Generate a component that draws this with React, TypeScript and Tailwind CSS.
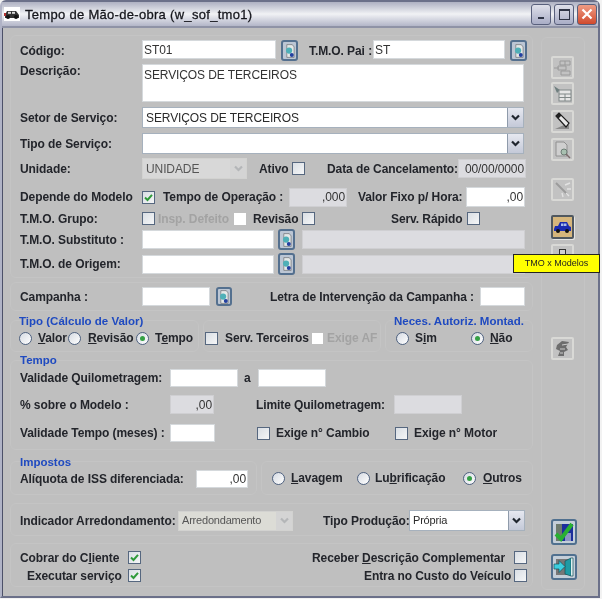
import type { ReactNode } from 'react';

const LABEL = 'whitespace-nowrap text-[12px] font-bold leading-none tracking-[-0.08px] text-[#23252b]';

function Label({ w, className = '', children }: { w?: string; className?: string; children: ReactNode }) {
    return <span className={`${LABEL} shrink-0 ${w ?? ''} ${className}`}>{children}</span>;
}

function Field({ className = '', right, gray, children }: { className?: string; right?: boolean; gray?: boolean; children?: ReactNode }) {
    return (
        <div
            className={`flex shrink-0 items-center border px-[1px] text-[12px] leading-none tracking-[-0.1px] text-[#333] ${right ? 'justify-end' : ''} ${
                gray ? 'border-[#cfcfd2] bg-[#dcdce0]' : 'border-[#d5d9dc] bg-white'
            } ${className}`}
        >
            {children}
        </div>
    );
}

function Check({ checked, className = '' }: { checked?: boolean; className?: string }) {
    return (
        <span className={`flex size-[13px] shrink-0 items-center justify-center border border-[#56677f] bg-gradient-to-br from-[#d9dee4] to-[#f5f6f7] ${className}`}>
            {checked && (
                <svg viewBox="0 0 11 11" className="size-[11px]">
                    <path d="M2 5.5 L4.5 8 L9 2.8" fill="none" stroke="#2f9a3a" strokeWidth="2" />
                </svg>
            )}
        </span>
    );
}

function Radio({ on }: { on?: boolean }) {
    return (
        <span className="flex size-[13px] shrink-0 items-center justify-center rounded-full border border-[#4f6280] bg-gradient-to-br from-[#d5dae2] to-white">
            {on && <span className="size-[5px] rounded-full bg-[#35a045]" />}
        </span>
    );
}

function Chevron({ light }: { light?: boolean }) {
    return (
        <svg viewBox="0 0 9 7" className="h-[7px] w-[9px]">
            <path d="M1 1.5 L4.5 5 L8 1.5" fill="none" stroke={light ? '#b4b6b8' : '#20262f'} strokeWidth="2.2" />
        </svg>
    );
}

function Select({ className = '', disabled, small, children }: { className?: string; disabled?: boolean; small?: boolean; children?: ReactNode }) {
    return (
        <div className={`flex shrink-0 border ${disabled ? 'border-[#d2d2d0] bg-[#d8d8d8]' : 'border-[#a6b1bd] bg-white'} ${className}`}>
            <div className={`flex flex-1 items-center overflow-hidden whitespace-nowrap pl-[3px] leading-none ${small ? 'text-[11px] tracking-[-0.2px]' : 'text-[12px] tracking-[-0.1px]'} ${disabled ? 'text-[#555]' : 'text-[#2a2a2a]'}`}>
                {children}
            </div>
            <div className={`flex w-[16px] items-center justify-center ${disabled ? 'bg-[#d4d4d4]' : 'bg-gradient-to-b from-[#e6e8f0] to-[#c4c9d8] border-l border-[#8f9bab]'}`}>
                <Chevron light={disabled} />
            </div>
        </div>
    );
}

function LookupButton({ className = '' }: { className?: string }) {
    return (
        <div className={`flex shrink-0 items-center justify-center rounded-[3px] border-2 border-[#54708f] bg-[#bcc6d4] ${className}`}>
            <svg viewBox="0 0 11 15" className="h-[14px] w-[10px]">
                <path d="M2 0.5 H8 L10 3 V14.5 H2 Z" fill="#e4e8e8" stroke="#555" strokeWidth="0.6" />
                <circle cx="4.5" cy="7" r="3.4" fill="#4fb0b8" />
                <circle cx="7.5" cy="12" r="2.2" fill="#2340a0" />
            </svg>
        </div>
    );
}

function ToolButton({ className = '', active, children }: { className?: string; active?: boolean; children: ReactNode }) {
    return (
        <div
            className={`flex w-[23px] items-center justify-center rounded-[2px] border-2 ${
                active ? 'border-[#50585f] bg-[#d6b67c] shadow-[1px_1px_0_#e4e4e4]' : 'border-[#d9d9d6] bg-[#c2c2c2]'
            } ${className}`}
        >
            {children}
        </div>
    );
}

function Panel({ className = '', children }: { className?: string; children?: ReactNode }) {
    return <div className={`shrink-0 rounded-[6px] border border-[#c4c4c4] bg-[#bfbfbf] ${className}`}>{children}</div>;
}

function Heading({ className = '', children }: { className?: string; children: ReactNode }) {
    return <div className={`h-[12px] whitespace-nowrap text-[11.5px] font-bold leading-[12px] text-[#1f4ac0] ${className}`}>{children}</div>;
}

function WinButton({ className = '', children }: { className?: string; children: ReactNode }) {
    return <div className={`flex h-[21px] w-[20px] items-center justify-center rounded-[3px] border border-[#59607c] ${className}`}>{children}</div>;
}

export default function App() {
    return (
        <div className="relative h-[599px] w-[602px] overflow-hidden bg-[#f2f2f2] [font-family:'Liberation_Sans',sans-serif] blur-[0.35px]">
            <div className="flex h-[598px] w-[600px] flex-col rounded-t-[6px] border-2 border-[#6b7089] border-l-[#b0b3c6] bg-[#bfbfbf] shadow-[inset_1px_0_0_#4c5068]">
                {/* barra de titulo */}
                <div className="flex h-[26px] shrink-0 items-center border-b-2 border-[#8f93a6] bg-gradient-to-b from-[#aeb1c2] via-[#f1f2f5] to-[#b3b6c8] pl-[2px] pr-[1px]">
                    <span className="flex h-[14px] w-[16px] shrink-0 items-center justify-center bg-white">
                        <svg viewBox="0 0 16 10" className="h-[10px] w-[16px]">
                            <path d="M1 6 L3 2 H12 L15 6 V9 H1 Z" fill="#333" />
                            <rect x="4" y="2.8" width="3" height="2" fill="#ddd" />
                            <rect x="8" y="2.8" width="3" height="2" fill="#ddd" />
                            <circle cx="4" cy="8" r="2" fill="#111" />
                            <circle cx="12" cy="8" r="2" fill="#111" />
                            <rect x="0" y="4" width="2" height="3" fill="#b03030" />
                        </svg>
                    </span>
                    <span className="ml-[5px] whitespace-nowrap text-[13px] leading-none tracking-[0.3px] text-[#15161c] [-webkit-text-stroke:0.3px_#15161c]">Tempo de Mão-de-obra (w_sof_tmo1)</span>
                    <div className="ml-auto flex gap-[3px]">
                        <WinButton className="bg-gradient-to-b from-[#dfe0ea] to-[#a9adc6]">
                            <span className="mt-[8px] h-[2px] w-[6px] bg-[#2f3446]" />
                        </WinButton>
                        <WinButton className="bg-gradient-to-b from-[#dfe0ea] to-[#a9adc6]">
                            <span className="size-[11px] border border-t-2 border-[#2f3446]" />
                        </WinButton>
                        <WinButton className="bg-gradient-to-b from-[#ee9b84] to-[#d0492c]">
                            <svg viewBox="0 0 12 12" className="size-[12px]">
                                <path d="M1.5 1.5 L10.5 10.5 M10.5 1.5 L1.5 10.5" stroke="#fff" strokeWidth="2.2" />
                            </svg>
                        </WinButton>
                    </div>
                </div>

                <div className="flex gap-[8px] pl-[8px] pt-[7px]">
                    {/* formulario */}
                    <div className="flex w-[523px] shrink-0 flex-col">
                        <Panel className="flex h-[243px] flex-col px-[9px] pt-[4px]">
                            <div className="flex h-[21px] items-start">
                                <Label w="w-[122px]" className="mt-[5px]">Código:</Label>
                                <Field className="h-[19px] w-[134px]">ST01</Field>
                                <LookupButton className="ml-[5px] h-[21px] w-[17px]" />
                                <Label w="w-[64px]" className="ml-[11px] mt-[5px]">T.M.O. Pai :</Label>
                                <Field className="h-[19px] w-[132px]">ST</Field>
                                <LookupButton className="ml-[5px] h-[21px] w-[17px]" />
                            </div>
                            <div className="mt-[3px] flex h-[38px] items-start">
                                <Label w="w-[122px]" className="mt-[1px]">Descrição:</Label>
                                <Field className="h-[38px] w-[382px] !items-start pt-[4px]">SERVIÇOS DE TERCEIROS</Field>
                            </div>
                            <div className="mt-[5px] flex h-[21px] items-center">
                                <Label w="w-[122px]">Setor de Serviço:</Label>
                                <Select className="h-[21px] w-[382px]">SERVIÇOS DE TERCEIROS</Select>
                            </div>
                            <div className="mt-[5px] flex h-[21px] items-center">
                                <Label w="w-[122px]">Tipo de Serviço:</Label>
                                <Select className="h-[21px] w-[382px]" />
                            </div>
                            <div className="mt-[4px] flex h-[21px] items-center">
                                <Label w="w-[122px]">Unidade:</Label>
                                <Select disabled className="h-[21px] w-[105px]">UNIDADE</Select>
                                <Label w="w-[33px]" className="ml-[12px]">Ativo</Label>
                                <Check />
                                <Label w="w-[131px]" className="ml-[22px]">Data de Cancelamento:</Label>
                                <Field gray right className="h-[19px] w-[68px]">00/00/0000</Field>
                            </div>
                            <div className="mt-[8px] flex h-[20px] items-center">
                                <Label w="w-[122px]">Depende do Modelo</Label>
                                <Check checked />
                                <Label w="w-[126px]" className="ml-[8px]">Tempo de Operação :</Label>
                                <Field gray right className="h-[19px] w-[58px]">,000</Field>
                                <Label w="w-[108px]" className="ml-[11px]">Valor Fixo p/ Hora:</Label>
                                <Field right className="h-[20px] w-[59px]">,00</Field>
                            </div>
                            <div className="mt-[5px] flex h-[13px] items-center">
                                <Label w="w-[122px]">T.M.O. Grupo:</Label>
                                <Check />
                                <Label w="w-[76px]" className="ml-[3px] !text-[#a3a3a3]">Insp. Defeito</Label>
                                <span className="h-[12px] w-[12px] shrink-0 bg-white" />
                                <Label w="w-[49px]" className="ml-[7px]">Revisão</Label>
                                <Check />
                                <Label w="w-[76px]" className="ml-[76px]">Serv. Rápido</Label>
                                <Check />
                            </div>
                            <div className="mt-[4px] flex h-[21px] items-center">
                                <Label w="w-[122px]">T.M.O. Substituto :</Label>
                                <Field className="h-[19px] w-[132px]" />
                                <LookupButton className="ml-[4px] h-[21px] w-[17px]" />
                                <Field gray className="ml-[7px] h-[19px] w-[223px]" />
                            </div>
                            <div className="mt-[3px] flex h-[22px] items-center">
                                <Label w="w-[122px]">T.M.O. de Origem:</Label>
                                <Field className="h-[19px] w-[132px]" />
                                <LookupButton className="ml-[4px] h-[22px] w-[17px]" />
                                <Field gray className="ml-[7px] h-[19px] w-[223px]" />
                            </div>
                        </Panel>

                        <Panel className="mt-[4px] flex h-[29px] items-center px-[9px]">
                            <Label w="w-[122px]">Campanha :</Label>
                            <Field className="h-[19px] w-[68px]" />
                            <LookupButton className="ml-[6px] h-[19px] w-[16px]" />
                            <Label w="w-[210px]" className="ml-[38px]">Letra de Intervenção da Campanha :</Label>
                            <Field className="h-[19px] w-[45px]" />
                        </Panel>

                        <div className="mt-[9px] flex gap-[4px]">
                            <Panel className="h-[32px] w-[189px] px-[8px]">
                                <Heading className="-mt-[6px]">Tipo (Cálculo de Valor)</Heading>
                                <div className="mt-[2px] flex h-[18px] items-center">
                                    <Radio />
                                    <Label w="w-[30px]" className="ml-[6px]"><u>V</u>alor</Label>
                                    <Radio />
                                    <Label w="w-[48px]" className="ml-[7px]"><u>R</u>evisão</Label>
                                    <Radio on />
                                    <Label className="ml-[6px]">T<u>e</u>mpo</Label>
                                </div>
                            </Panel>
                            <Panel className="flex h-[32px] w-[178px] items-start pl-[1px] pt-[8px]">
                                <div className="flex h-[18px] items-center">
                                    <Check />
                                    <Label w="w-[87px]" className="ml-[7px]">Serv. Terceiros</Label>
                                    <span className="size-[11px] shrink-0 bg-white" />
                                    <Label className="ml-[4px] !text-[#a3a3a3]">Exige AF</Label>
                                </div>
                            </Panel>
                            <Panel className="h-[32px] w-[148px] pl-[8px]">
                                <Heading className="-mt-[6px]">Neces. Autoriz. Montad.</Heading>
                                <div className="mt-[2px] flex h-[18px] items-center pl-[2px]">
                                    <Radio />
                                    <Label w="w-[56px]" className="ml-[6px]">S<u>i</u>m</Label>
                                    <Radio on />
                                    <Label className="ml-[6px]"><u>N</u>ão</Label>
                                </div>
                            </Panel>
                        </div>

                        <Panel className="mt-[8px] h-[90px] px-[9px]">
                            <Heading className="-mt-[7px]">Tempo</Heading>
                            <div className="mt-[3px] flex h-[18px] items-center">
                                <Label w="w-[150px]">Validade Quilometragem:</Label>
                                <Field className="h-[18px] w-[68px]" />
                                <Label w="w-[14px]" className="ml-[6px]">a</Label>
                                <Field className="h-[18px] w-[68px]" />
                            </div>
                            <div className="mt-[8px] flex h-[19px] items-center">
                                <Label w="w-[150px]">% sobre o Modelo :</Label>
                                <Field gray right className="h-[19px] w-[44px]">,00</Field>
                                <Label w="w-[138px]" className="ml-[42px]">Limite Quilometragem:</Label>
                                <Field gray className="h-[19px] w-[68px]" />
                            </div>
                            <div className="mt-[10px] flex h-[18px] items-center">
                                <Label w="w-[150px]">Validade Tempo (meses) :</Label>
                                <Field className="h-[18px] w-[45px]" />
                                <Check className="ml-[42px]" />
                                <Label w="w-[119px]" className="ml-[6px]">Exige n° Cambio</Label>
                                <Check />
                                <Label className="ml-[6px]">Exige n° Motor</Label>
                            </div>
                        </Panel>

                        <div className="mt-[11px] flex gap-[4px]">
                            <Panel className="h-[34px] w-[247px] px-[9px]">
                                <Heading className="-mt-[6px]">Impostos</Heading>
                                <div className="mt-[2px] flex h-[18px] items-center">
                                    <Label w="w-[176px]" className="tracking-[-0.2px]">Alíquota de ISS diferenciada:</Label>
                                    <Field right className="h-[18px] w-[52px]">,00</Field>
                                </div>
                            </Panel>
                            <Panel className="flex h-[34px] w-[272px] items-center pl-[10px]">
                                <Radio />
                                <Label w="w-[66px]" className="ml-[6px]"><u>L</u>avagem</Label>
                                <Radio />
                                <Label w="w-[88px]" className="ml-[5px]">Lu<u>b</u>rificação</Label>
                                <Radio on />
                                <Label className="ml-[7px]"><u>O</u>utros</Label>
                            </Panel>
                        </div>

                        <Panel className="mt-[8px] flex h-[33px] items-start px-[9px] pt-[6px]">
                            <div className="flex h-[21px] items-center">
                                <Label w="w-[158px]">Indicador Arredondamento:</Label>
                                <Select disabled small className="h-[20px] w-[115px] !bg-[#dcdcd6]">Arredondamento</Select>
                                <Label w="w-[86px]" className="ml-[30px]">Tipo Produção:</Label>
                                <Select small className="h-[21px] w-[116px]">Própria</Select>
                            </div>
                        </Panel>

                        <Panel className="mt-[7px] h-[44px] px-[9px] pt-[7px]">
                            <div className="flex h-[13px] items-center">
                                <Label w="w-[108px]">Cobrar do C<u>l</u>iente</Label>
                                <Check checked />
                                <Label w="w-[202px]" className="ml-[171px]">Receber <u>D</u>escrição Complementar</Label>
                                <Check />
                            </div>
                            <div className="mt-[5px] flex h-[13px] items-center">
                                <Label w="w-[101px]" className="ml-[7px]">Executar serviço</Label>
                                <Check checked />
                                <Label w="w-[150px]" className="ml-[223px]">Entra no Custo do Veículo</Label>
                                <Check />
                            </div>
                        </Panel>
                    </div>

                    {/* barra de botoes */}
                    <Panel className="mt-[2px] flex h-[553px] w-[44px] flex-col pl-[9px]">
                        <ToolButton className="mt-[18px] h-[23px]">
                            <svg viewBox="0 0 19 19" className="size-[19px]" fill="none" stroke="#9a9a9a">
                                <path d="M1 10 H6 M7 3 H17 V7 H7 Z M5 8 H13 V12 H5 Z M8 13 H17 V17 H8 Z M12 3 V7" />
                            </svg>
                        </ToolButton>
                        <ToolButton className="mt-[3px] h-[23px]">
                            <svg viewBox="0 0 19 19" className="size-[19px]">
                                <path d="M1 2 L7 6 L4 9 Z" fill="#6f7f7f" />
                                <rect x="6" y="6" width="12" height="11" fill="#e6e6e6" stroke="#808888" />
                                <path d="M6 10 H18 M6 13.5 H18 M12 10 V17" stroke="#808888" />
                            </svg>
                        </ToolButton>
                        <ToolButton className="mt-[5px] h-[23px]">
                            <svg viewBox="0 0 19 19" className="size-[19px]">
                                <path d="M2 17 L11 13 H16 V17 Z" fill="#8a8a8a" />
                                <path d="M3 4 L6 1 L16 11 L13 15 Z" fill="#e8e8e8" stroke="#1d1d1d" strokeWidth="1.2" />
                                <path d="M3 4 L6 1 L8.5 3.5 L5.5 6.5 Z" fill="#222" />
                            </svg>
                        </ToolButton>
                        <ToolButton className="mt-[5px] h-[23px]">
                            <svg viewBox="0 0 19 19" className="size-[19px]">
                                <path d="M3 2 H11 L14 5 V16 H3 Z" fill="#cfcfcf" stroke="#909090" />
                                <circle cx="11" cy="12" r="3" fill="#a8c0b0" stroke="#6e7e76" />
                                <path d="M13 14 L17 18" stroke="#7a6a6a" strokeWidth="1.5" />
                            </svg>
                        </ToolButton>
                        <ToolButton className="mt-[17px] h-[23px]">
                            <svg viewBox="0 0 19 19" className="size-[19px]">
                                <path d="M3 3 L14 14" stroke="#9b9b9b" strokeWidth="2" />
                                <path d="M12 5 L17 3 M14 9 L18 9 M9 13 L10 17 M13 13 L16 16" stroke="#e2e2e2" strokeWidth="1.4" />
                            </svg>
                        </ToolButton>
                        <ToolButton active className="mt-[14px] h-[24px]">
                            <svg viewBox="0 0 19 12" className="h-[12px] w-[19px]">
                                <path d="M1 8 L2 5 H5 L7 1 H14 L16 5 L18 6 V10 H1 Z" fill="#1a2bb0" />
                                <rect x="8" y="2.5" width="2.5" height="2.5" fill="#a8bce8" />
                                <rect x="11" y="2.5" width="2.5" height="2.5" fill="#a8bce8" />
                                <circle cx="5" cy="10" r="2" fill="#111" />
                                <circle cx="14" cy="10" r="2" fill="#111" />
                            </svg>
                        </ToolButton>
                        <ToolButton className="mt-[5px] h-[28px] !items-start">
                            <span className="mt-[3px] h-[8px] w-[7px] border border-[#333] bg-[#d0d0d0]" />
                        </ToolButton>
                        <ToolButton className="mt-[65px] h-[23px]">
                            <svg viewBox="0 0 19 19" className="size-[19px]">
                                <path d="M4 6 L9 2 L16 3 L13 8 L15 11 L11 13 L11 17 L5 17 L7 12 L3 10 Z" fill="#6d6d6d" />
                                <path d="M9 6 L15 5 M7 10 L12 10 M7 14 L10 14" stroke="#ccc" />
                            </svg>
                        </ToolButton>
                        <div className="mt-[159px] flex h-[26px] w-[26px] items-center justify-center rounded-[3px] border-2 border-[#50708f] bg-[#c4ced8]">
                            <svg viewBox="0 0 22 22" className="size-[22px]">
                                <rect x="3" y="3" width="17" height="17" fill="#1c2f9c" />
                                <rect x="3" y="3" width="6" height="17" fill="#6d7a6d" />
                                <rect x="12" y="12" width="6" height="8" fill="#8c96c4" />
                                <path d="M3 13 L8 18 L19 3" fill="none" stroke="#28b032" strokeWidth="4" />
                            </svg>
                        </div>
                        <div className="mt-[9px] flex h-[26px] w-[26px] items-center justify-center rounded-[3px] border-2 border-[#50708f] bg-[#c4ced8]">
                            <svg viewBox="0 0 22 22" className="size-[22px]">
                                <rect x="3" y="3" width="15" height="16" fill="#777" />
                                <path d="M12 5 L18 2 V20 L12 18 Z" fill="#1f9aa4" stroke="#14525a" strokeWidth="0.7" />
                                <path d="M18 2 H20 V20 H18" fill="#dff0f0" stroke="#14525a" strokeWidth="0.7" />
                                <path d="M1 8 H6 V4.5 L12 10.5 L6 16.5 V13 H1 Z" fill="#3ccfe0" stroke="#14525a" strokeWidth="0.7" />
                            </svg>
                        </div>
                    </Panel>
                </div>
            </div>

            <div className="absolute left-[513px] top-[254px] flex h-[19px] w-[87px] items-center justify-center border border-[#222] bg-[#ffff00] text-[9px] leading-none text-[#222]">
                TMO x Modelos
            </div>
        </div>
    );
}
